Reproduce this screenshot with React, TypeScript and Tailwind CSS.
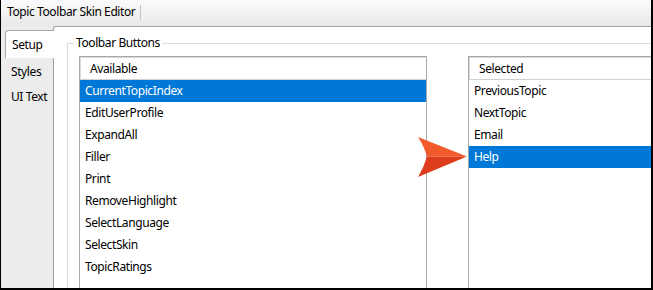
const available = [
  "CurrentTopicIndex",
  "EditUserProfile",
  "ExpandAll",
  "Filler",
  "Print",
  "RemoveHighlight",
  "SelectLanguage",
  "SelectSkin",
  "TopicRatings",
];

const selected = ["PreviousTopic", "NextTopic", "Email", "Help"];

function ListBox({
  title,
  items,
  active,
  className,
}: {
  title: string;
  items: string[];
  active: string;
  className: string;
}) {
  return (
    <div className={`flex flex-col border border-[#a8a8a8] bg-white ${className}`}>
      {/* header */}
      <div className="h-[23px] flex items-center pl-[9px] border-t border-l border-[#dadada] border-b border-b-[#d0d0d0]">
        {title}
      </div>
      {items.map((item) => (
        <div
          key={item}
          className={
            item === active
              ? "h-[22px] flex items-center pl-[5px] bg-[#0078d7] text-white"
              : "h-[22px] flex items-center pl-[5px] text-black"
          }
        >
          {item}
        </div>
      ))}
    </div>
  );
}

export default function App() {
  return (
    <div className="relative w-[653px] h-[290px] overflow-hidden flex flex-col bg-[#ececec] border-l border-r-2 border-b-2 border-black text-[12px] tracking-[-0.4px] text-black font-['Noto_Sans',sans-serif]">
      {/* title bar */}
      <div className="h-[26px] shrink-0 flex items-center pl-[6px] pb-[2px] bg-gradient-to-b from-[#fbfbfb] to-[#e8e8e8]">
        <span>Topic Toolbar Skin Editor</span>
        <span className="ml-[5px] h-[15px] border-l border-[#c4c4c4]" />
      </div>

      <div className="flex flex-1 min-h-0">
        {/* tabs */}
        <div className="w-[52px] shrink-0 flex flex-col pt-[4px]">
          <div className="relative z-10 ml-[4px] w-[49px] h-[28px] flex items-center pl-[6px] bg-white border-t border-l border-[#a8a8a8] rounded-tl-[4px]">
            Setup
          </div>
          <div className="h-[28px] flex items-center pl-[10px]">Styles</div>
          <div className="h-[22px] flex items-center pl-[10px]">UI Text</div>
        </div>

        {/* content panel */}
        <div className="flex-1 min-w-0 bg-white border-l border-t border-[#a0a0a0] rounded-tl-[3px] pl-[13px] pt-[16px]">
          <div className="relative h-full border-l border-t border-[#dcdcdc] pl-[11px] pt-[12px]">
            <span className="absolute left-[6px] top-[-9px] h-[16px] px-[2px] flex items-center bg-white">
              Toolbar Buttons
            </span>
            <div className="flex gap-[41px] h-[300px]">
              <ListBox title="Available" items={available} active="CurrentTopicIndex" className="w-[348px] shrink-0" />
              <ListBox title="Selected" items={selected} active="Help" className="w-[200px] shrink-0" />
            </div>
          </div>
        </div>
      </div>

      {/* callout arrow */}
      <svg className="absolute left-[414px] top-[135px]" width="54" height="45" viewBox="0 0 54 45">
        <path d="M3 2 L52 21.5 L12 21.5 Q9 11 3 2 Z" fill="#f15a2a" />
        <path d="M12 21.5 L52 21.5 L3 42 Q9 32 12 21.5 Z" fill="#dd3d1c" />
      </svg>
    </div>
  );
}
